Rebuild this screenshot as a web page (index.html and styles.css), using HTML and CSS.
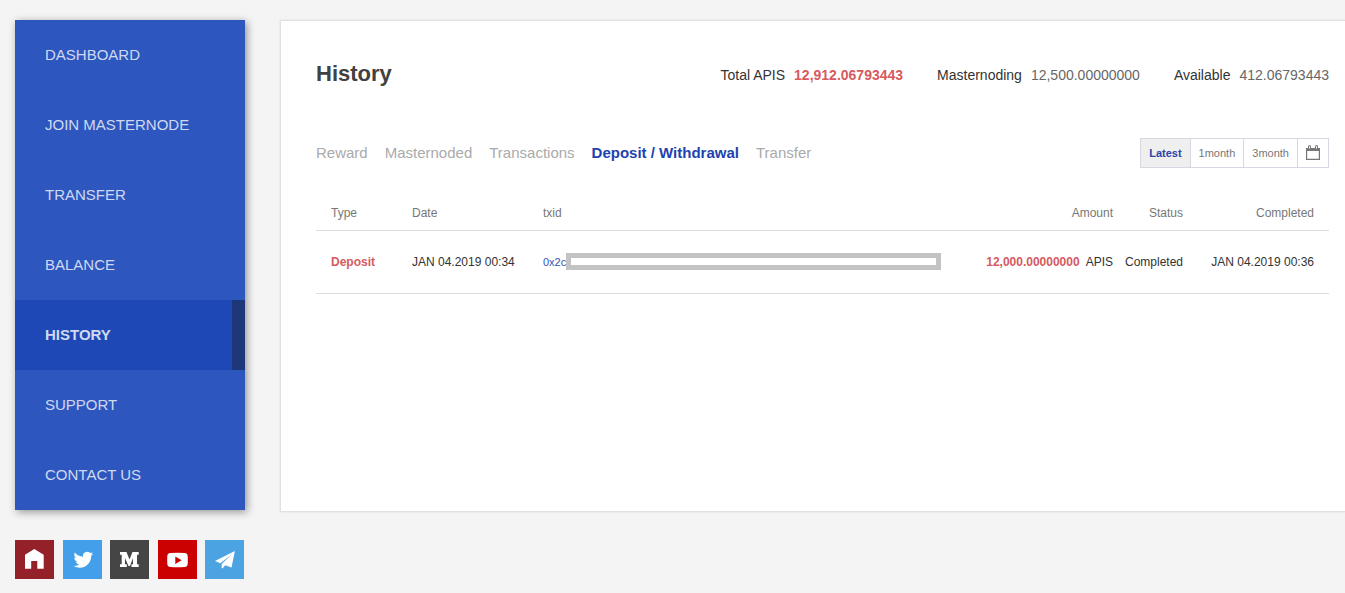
FILE: index.html
```html
<!DOCTYPE html>
<html lang="en">
<head>
    <meta charset="UTF-8">
    <meta name="viewport" content="width=device-width, initial-scale=1.0">
    <title>History</title>
    <link rel="stylesheet" href="styles.css">
</head>
<body>
    <div class="wrap">
        <aside class="sidebar">
            <nav class="menu">
                <a href="#">DASHBOARD</a>
                <a href="#">JOIN MASTERNODE</a>
                <a href="#">TRANSFER</a>
                <a href="#">BALANCE</a>
                <a href="#" class="active">HISTORY</a>
                <a href="#">SUPPORT</a>
                <a href="#">CONTACT US</a>
            </nav>
            <div class="social">
                <a href="#" class="home" aria-label="Home">
                    <svg viewBox="0 0 39 39"><path d="M19.300 9L28.700 14.800V28.700H22.300V21H16.200V28.700H10V14.800Z"/></svg>
                </a>
                <a href="#" class="twitter" aria-label="Twitter">
                    <svg viewBox="0 0 39 39"><path transform="translate(10.500 10) scale(.82)" d="M23.950 4.570a10 10 0 0 1-2.820.780 4.960 4.960 0 0 0 2.160-2.730c-.950.560-2 .960-3.120 1.180a4.920 4.920 0 0 0-8.390 4.490C7.690 8.100 4.070 6.130 1.640 3.160a4.820 4.820 0 0 0-.670 2.480c0 1.710.870 3.210 2.190 4.100a4.900 4.900 0 0 1-2.230-.620v.060a4.920 4.920 0 0 0 3.950 4.830 5 5 0 0 1-2.210.080 4.940 4.940 0 0 0 4.600 3.420A9.870 9.870 0 0 1 0 19.540a13.990 13.990 0 0 0 7.550 2.210c9.050 0 14-7.500 14-13.980 0-.210 0-.420-.020-.630a9.940 9.940 0 0 0 2.460-2.550z"/></svg>
                </a>
                <a href="#" class="medium" aria-label="Medium">
                    <svg viewBox="0 0 39 39"><path d="M10 12H16.500L19.500 19.500L22.500 12H28.700V14.700H27V24.300H28.700V27H21.500V24.300H23V18L20 26H18.500L15 18V24.300H16.800V27H10V24.300H11.700V14.700H10Z"/></svg>
                </a>
                <a href="#" class="youtube" aria-label="YouTube">
                    <svg viewBox="0 0 39 39"><path fill-rule="evenodd" d="M12.500 13Q19.500 12.400 26.500 13Q29.500 13.200 29.700 16Q30 20 29.700 24Q29.500 26.800 26.500 27Q19.500 27.600 12.500 27Q9.500 26.800 9.300 24Q9 20 9.300 16Q9.500 13.200 12.500 13ZM17.300 16.500V24L23.600 20.200Z"/></svg>
                </a>
                <a href="#" class="telegram" aria-label="Telegram">
                    <svg viewBox="0 0 39 39"><path d="M29.900 11L10 21L15.300 23.200L26.500 14.500L16.700 24V28.300H17.700L20.300 25.200L26.500 27.600Z"/></svg>
                </a>
            </div>
        </aside>

        <main class="panel">
            <header class="panel-head">
                <h1>History</h1>
                <dl class="totals">
                    <div class="total"><dt>Total APIS</dt><dd>12,912.06793443</dd></div>
                    <div><dt>Masternoding</dt><dd>12,500.00000000</dd></div>
                    <div><dt>Available</dt><dd>412.06793443</dd></div>
                </dl>
            </header>

            <div class="toolbar">
                <nav class="tabs">
                    <a href="#">Reward</a>
                    <a href="#">Masternoded</a>
                    <a href="#">Transactions</a>
                    <a href="#" class="active">Deposit / Withdrawal</a>
                    <a href="#">Transfer</a>
                </nav>
                <div class="period">
                    <button type="button" class="active">Latest</button>
                    <button type="button">1month</button>
                    <button type="button">3month</button>
                    <button type="button" aria-label="Pick dates">
                        <svg class="calendar" viewBox="0 0 14 16"><path fill-rule="evenodd" d="M0 3H2V1.500Q2 0 3.500 0T5 1.500V3H9V1.500Q9 0 10.500 0T12 1.500V3H14V15H0ZM1.200 6V13.800H12.800V6ZM3 1.200V3.500H4V1.200ZM10 1.200V3.500H11V1.200Z"/></svg>
                    </button>
                </div>
            </div>

            <table class="history">
                <thead>
                    <tr>
                        <th class="col-type">Type</th>
                        <th class="col-date">Date</th>
                        <th>txid</th>
                        <th class="col-amount">Amount</th>
                        <th class="col-status">Status</th>
                        <th class="col-done">Completed</th>
                    </tr>
                </thead>
                <tbody>
                    <tr>
                        <td class="col-type">Deposit</td>
                        <td class="col-date">JAN 04.2019 00:34</td>
                        <td><div class="txid"><a href="#">0x2c</a><span class="mask"></span></div></td>
                        <td class="col-amount"><b>12,000.00000000</b>APIS</td>
                        <td class="col-status">Completed</td>
                        <td class="col-done">JAN 04.2019 00:36</td>
                    </tr>
                </tbody>
            </table>
        </main>
    </div>
</body>
</html>
```
FILE: styles.css
```css
* {
    box-sizing: border-box;
}

body {
    margin: 0;
    background-color: #f4f4f4;
    color: #333;
    font-family: "Liberation Sans", Arial, sans-serif;
    font-size: 12px;
}

a {
    text-decoration: none;
}

.wrap {
    display: flex;
    gap: 35px;
    padding: 20px 0 14px 15px;
}

/* sidebar */
.sidebar {
    flex: none;
    width: 230px;
}

.menu {
    background-color: #2d57bf;
    box-shadow: 2px 2px 8px rgba(0, 0, 0, 0.4);
}

.menu a {
    display: block;
    padding: 0 30px;
    color: #d0d9f0;
    font-size: 15px;
    line-height: 70px;
}

.menu .active {
    border-right: 13px solid #1e377b;
    background-color: #1e48b5;
    font-weight: bold;
}

.social {
    display: flex;
    justify-content: space-between;
    margin-top: 30px;
    padding-right: 1px;
}

.social a {
    width: 39px;
    height: 39px;
}

.social svg {
    display: block;
    fill: #fff;
}

.home {
    background-color: #942029;
}

.twitter {
    background-color: #439fea;
}

.medium {
    background-color: #454545;
}

.youtube {
    background-color: #cb0000;
}

.telegram {
    background-color: #4ca3e2;
}

/* content */
.panel {
    flex: 1;
    align-self: flex-start;
    min-height: 492px;
    padding: 35px 16px 35px 35px;
    border: 1px solid #e1e1e1;
    border-right: 0;
    background-color: #fff;
    box-shadow: 0 0 2px rgba(0, 0, 0, 0.1);
}

.panel-head {
    display: flex;
    justify-content: space-between;
    align-items: center;
    height: 36px;
}

h1 {
    margin: 0;
    color: #414141;
    font-size: 22px;
}

.totals {
    display: flex;
    gap: 34px;
    margin: 0;
    padding-top: 2px;
    font-size: 14px;
}

.totals div {
    display: flex;
    gap: 9px;
}

.totals dd {
    margin: 0;
    color: #666;
}

.totals .total dd {
    color: #d65a5f;
    font-weight: bold;
}

.toolbar {
    display: flex;
    justify-content: space-between;
    align-items: center;
    margin-top: 46px;
}

.tabs {
    display: flex;
    gap: 17px;
    padding-bottom: 2px;
    font-size: 15px;
}

.tabs a {
    color: #aaa;
}

.tabs .active {
    color: #1e42b0;
    font-weight: bold;
}

.period {
    display: flex;
    border: 1px solid #d7d7e2;
}

.period button {
    height: 28px;
    padding: 0 8px;
    border: 0;
    background-color: #fff;
    color: #777;
    font-family: inherit;
    font-size: 11px;
}

.period button + button {
    border-left: 1px solid #d7d7e2;
}

.period .active {
    background-color: #efefef;
    color: #2a44ab;
    font-weight: bold;
}

.calendar {
    display: block;
    width: 14px;
    height: 16px;
    fill: #777;
}

.history {
    width: 100%;
    margin-top: 28px;
    border-collapse: collapse;
    table-layout: fixed;
}

.history th,
.history td {
    height: 34px;
    padding: 0;
    border-bottom: 1px solid #ddd;
    text-align: left;
}

.history th {
    color: #777;
    font-weight: normal;
}

.history td {
    height: 63px;
}

.history .col-type {
    width: 96px;
    padding-left: 15px;
}

td.col-type {
    color: #d65a5f;
    font-weight: bold;
}

.col-date {
    width: 131px;
}

.history .col-amount {
    width: 172px;
    text-align: right;
}

.col-amount b {
    margin-right: 6px;
    color: #d65a5f;
}

.history .col-status {
    width: 70px;
    text-align: right;
}

.history .col-done {
    width: 146px;
    padding-right: 15px;
    text-align: right;
}

.txid {
    display: flex;
    align-items: center;
}

.txid a {
    color: #3a50b8;
    font-size: 11px;
}

.mask {
    flex: 1;
    height: 17px;
    border: 5px solid #c3c3c3;
    background-color: #fff;
}
```
